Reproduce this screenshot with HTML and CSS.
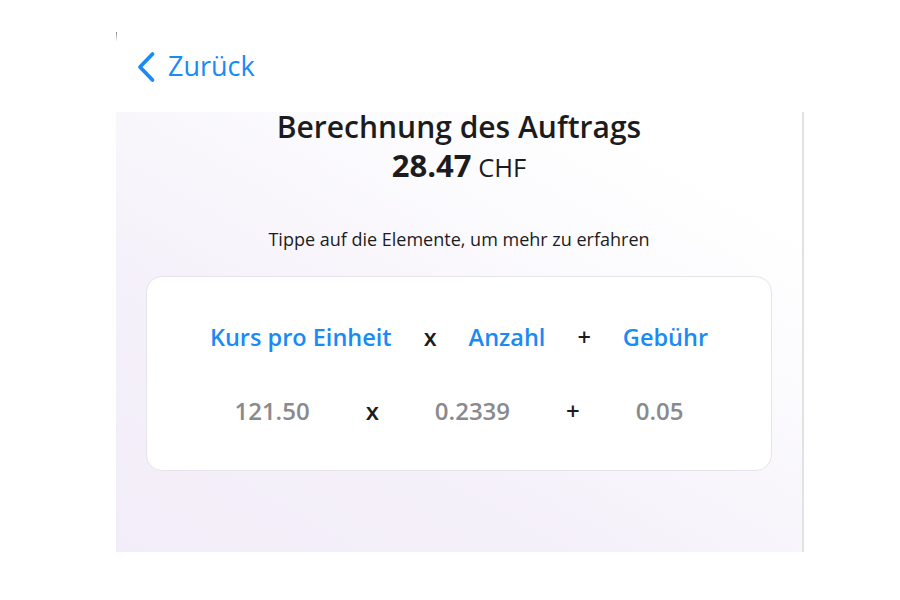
FILE: index.html
```html
<!DOCTYPE html>
<html lang="de">
<head>
  <meta charset="UTF-8" />
  <meta name="viewport" content="width=device-width, initial-scale=1.0"/>
  <title>Berechnung des Auftrags</title>
  <link rel="stylesheet" href="styles.css">
</head>
<body>
  <div class="screen">
    <header class="top-bar">
      <a href="#" class="back-link">
        <svg class="back-icon" width="20" height="32" viewBox="0 0 20 32" fill="none">
          <path d="M16.5 3 L4 16 L16.5 29" stroke="currentColor" stroke-width="3.8" stroke-linecap="round" stroke-linejoin="round"/>
        </svg>
        <span>Zurück</span>
      </a>
    </header>

    <main class="content">
      <h1 class="title">Berechnung des Auftrags</h1>
      <div class="total"><strong>28.47</strong> CHF</div>

      <p class="hint">Tippe auf die Elemente, um mehr zu erfahren</p>

      <div class="formula-card">
        <div class="formula-row labels">
          <a href="#" class="term">Kurs pro Einheit</a>
          <span class="op">x</span>
          <a href="#" class="term">Anzahl</a>
          <span class="op">+</span>
          <a href="#" class="term">Gebühr</a>
        </div>
        <div class="formula-row values">
          <span class="value">121.50</span>
          <span class="op">x</span>
          <span class="value">0.2339</span>
          <span class="op">+</span>
          <span class="value">0.05</span>
        </div>
      </div>
    </main>
  </div>
</body>
</html>
```

FILE: styles.css
```css
:root {
  --blue: #1a8af5;
  --text: #1c1c1e;
  --muted: #8a8a8e;
  --card-border: #e6e4ea;
}

* {
  box-sizing: border-box;
}

body {
  margin: 0;
  font-family: 'Open Sans', Lato, sans-serif;
  background: #fff;
  color: var(--text);
}

.screen {
  width: 688px;
  margin: 30px 0 0 116px;
  display: flex;
  flex-direction: column;
}

/* header is white, with the little edge tick of the screenshot */
.top-bar {
  height: 82px;
  display: flex;
  align-items: center;
  padding-left: 20px;
  background: linear-gradient(#8a8a8a, rgba(255,255,255,0)) no-repeat 0 2px / 1px 10px;
}

.back-link {
  display: flex;
  align-items: center;
  gap: 12px;
  color: var(--blue);
  text-decoration: none;
  font-size: 27px;
  line-height: 32px;
  margin-top: -8px;
}

.back-link span {
  margin-top: -2px;
}

.back-icon {
  display: block;
}

.content {
  height: 440px;
  border-right: 2px solid #e2e2e4;
  background: linear-gradient(30deg, #f2edf8 0%, #f5f1fa 35%, #fbfafd 65%, #fff 85%);
  display: flex;
  flex-direction: column;
  align-items: center;
}

.title {
  margin: 0;
  font-size: 30px;
  font-weight: 600;
  line-height: 30px;
}

.total {
  margin-top: 8px;
  font-size: 25.5px;
  line-height: 30px;
}

.total strong {
  font-size: 31px;
  font-weight: 700;
}

.hint {
  margin: 46px 0 0;
  font-size: 18px;
  line-height: 22px;
}

.formula-card {
  width: 626px;
  height: 195px;
  margin-top: 26px;
  background: #fff;
  border: 1.5px solid var(--card-border);
  border-radius: 16px;
  display: flex;
  flex-direction: column;
  justify-content: center;
  gap: 46px;
}

.formula-row {
  display: flex;
  justify-content: center;
  align-items: center;
  line-height: 28px;
}

.labels {
  gap: 32px;
  font-size: 23.5px;
}

.values {
  gap: 56px;
  font-size: 24px;
}

.term {
  color: var(--blue);
  font-weight: 600;
  text-decoration: none;
}

.value {
  color: var(--muted);
  font-weight: 600;
}

.op {
  color: var(--text);
  font-weight: 600;
}
```
